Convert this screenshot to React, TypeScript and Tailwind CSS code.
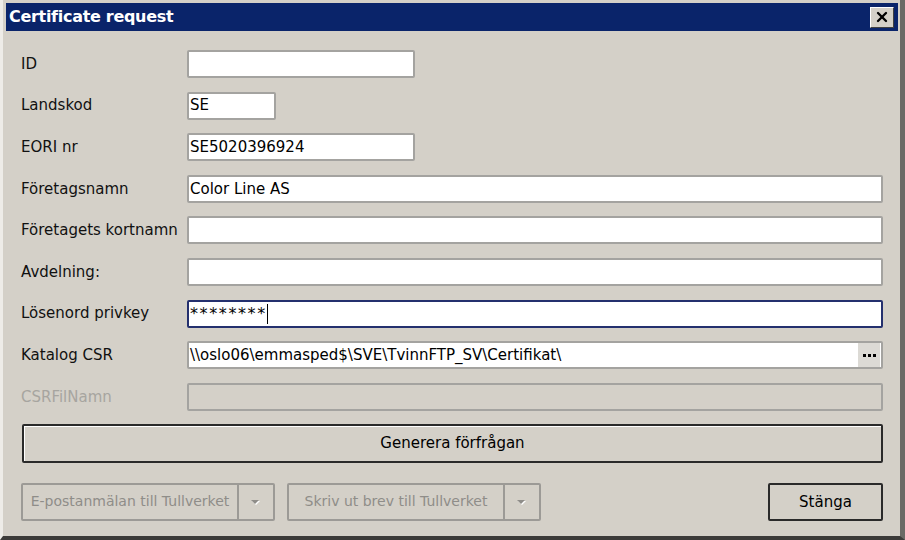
import { X } from 'lucide-react';

const font = { fontFamily: '"DejaVu Sans", Tahoma, sans-serif' };

type FieldProps = {
  label: string;
  value?: string;
  width?: string;
  active?: boolean;
  disabled?: boolean;
  browse?: boolean;
};

const Field = ({ label, value = '', width = 'flex-1', active, disabled, browse }: FieldProps) => (
  <div className="flex items-center h-[28px]">
    <div className={`w-[166px] text-[15px] ${disabled ? 'text-[#a7a5a0]' : 'text-[#111]'}`}>{label}</div>
    <div
      className={`${width} h-full flex items-center rounded-[2px] border-2 ${
        active ? 'border-[#24306e]' : 'border-[#a4a3a0]'
      } ${disabled ? 'bg-[#d4d0c8]' : 'bg-white'}`}
    >
      <span
        className={`pl-[1px] text-black whitespace-nowrap ${
          active ? 'text-[16px] tracking-[1.6px]' : 'text-[15px]'
        }`}
      >
        {value}
      </span>
      {active && <span className="w-[1px] h-[20px] bg-black" />}
      {browse && (
        <div className="ml-auto mr-[1px] w-[22px] h-[24px] bg-[#dcdad5] flex items-center justify-center gap-[2px]">
          <span className="w-[3px] h-[3px] bg-black" />
          <span className="w-[3px] h-[3px] bg-black" />
          <span className="w-[3px] h-[3px] bg-black" />
        </div>
      )}
    </div>
  </div>
);

const SplitButton = ({ label }: { label: string }) => (
  <div className="flex w-[254px] h-[38px] border-2 border-[#9c9a96] rounded-[2px]">
    <div className="flex-1 flex items-center justify-center text-[14px] text-[#8f8d89]">{label}</div>
    <div className="w-[36px] border-l-2 border-[#9c9a96] flex items-center justify-center">
      <svg width="12" height="8" viewBox="0 0 12 8">
        <path d="M2 3 L10 3 L6 7 Z" fill="#fff" />
        <path d="M1 2 L9 2 L5 6 Z" fill="#8f8d89" />
      </svg>
    </div>
  </div>
);

export default function App() {
  return (
    <div
      className="w-[905px] h-[540px] bg-[#d4d0c8] border-l-[3px] border-l-[#eeece8] border-r-[5px] border-r-[#6b6a66] border-b-[4px] border-b-[#3c3b39] pt-[3px] pl-[3px] pr-[2px] flex flex-col overflow-hidden"
      style={font}
    >
      {/* Title bar */}
      <div className="h-[28px] bg-[#0a246a] flex items-center pl-[3px] pr-[4px]">
        <span className="text-white font-bold text-[16px] tracking-[-0.3px]">Certificate request</span>
        <div className="ml-auto w-[24px] h-[21px] bg-[#d4d0c8] border border-t-white border-l-white border-r-[#404040] border-b-[#404040] flex items-center justify-center">
          <X className="w-[16px] h-[16px] text-black" strokeWidth={3.5} />
        </div>
      </div>

      {/* Form */}
      <div className="flex-1 pl-[15px] pr-[15px] pt-[19px] flex flex-col">
        <div className="flex flex-col gap-[13.6px]">
          <Field label="ID" width="w-[228px] flex-none" />
          <Field label="Landskod" value="SE" width="w-[89px] flex-none" />
          <Field label="EORI nr" value="SE5020396924" width="w-[228px] flex-none" />
          <Field label="Företagsnamn" value="Color Line AS" />
          <Field label="Företagets kortnamn" />
          <Field label="Avdelning:" />
          <Field label="Lösenord privkey" value="********" active />
          <Field label="Katalog CSR" value="\\oslo06\emmasped$\SVE\TvinnFTP_SV\Certifikat\" browse />
          <Field label="CSRFilNamn" disabled />
        </div>

        <div className="mt-[13px] ml-[1px] h-[39px] border-2 border-[#2a2a2a] rounded-[2px] flex items-center justify-center text-[15px] text-black shadow-[inset_1px_1px_0_#fff]">
          Generera förfrågan
        </div>

        <div className="mt-[20px] flex items-center gap-[12px]">
          <SplitButton label="E-postanmälan till Tullverket" />
          <SplitButton label="Skriv ut brev till Tullverket" />
          <div className="ml-auto w-[115px] h-[38px] border-2 border-[#2a2a2a] rounded-[2px] flex items-center justify-center text-[15px] text-black">
            Stänga
          </div>
        </div>
      </div>
    </div>
  );
}
